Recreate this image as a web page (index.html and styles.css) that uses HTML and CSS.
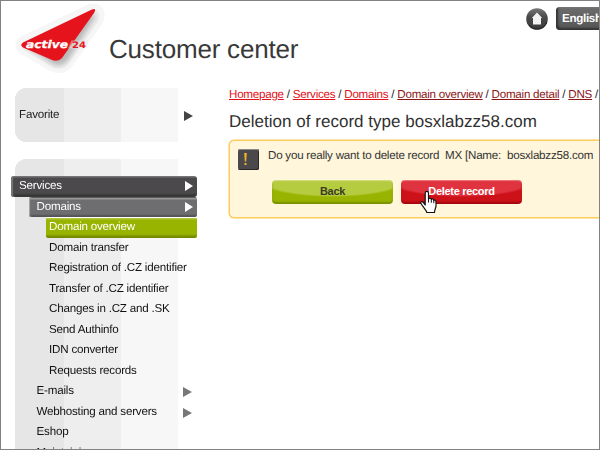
FILE: index.html
```html
<!DOCTYPE html>
<html lang="en">
<head>
<meta charset="utf-8">
<title>Customer center</title>
<link rel="stylesheet" href="styles.css">
</head>
<body>
<div class="window">
  <header class="header">
    <svg class="logo" width="94" height="76" viewBox="12 1 94 76">
      <defs>
        <filter id="soft" x="-30%" y="-30%" width="160%" height="160%"><feGaussianBlur stdDeviation="2.2"/></filter>
      </defs>
      <path d="M25 45 L92 13 Q97 12 94 19 L65 60 Q61 66 53 62Z" fill="#f6f6f6" stroke="#f6f6f6" stroke-width="19" stroke-linejoin="round"/>
      <path d="M27 46 L91 15 Q96 13 93 20 L65 60 Q61 66 53 62Z" fill="#ececec" stroke="#ececec" stroke-width="10" stroke-linejoin="round"/>
      <path d="M27 47 L92 15 Q97 13 94 19 L68 60 Q61 68 53 64Z" fill="#999" opacity=".6" filter="url(#soft)"/>
      <path d="M23 42.500 L92 9.500 Q97 7.500 94 13 L62 58 Q58 62.500 51 59.500 L23 47.500 Q19.500 45 23 42.500Z" fill="#e5131b"/>
      <path d="M71.500 40.500H88L86.500 48.500H68Z" fill="#e4e4e4" opacity=".5"/>
      <text class="logo-name" x="26" y="47.500" textLength="42" lengthAdjust="spacingAndGlyphs">active</text>
      <text class="logo-number" x="72" y="47.500" textLength="14" lengthAdjust="spacingAndGlyphs">24</text>
    </svg>
    <h1 class="brand">Customer center</h1>
    <div class="tools">
      <svg class="home" width="22" height="22" viewBox="0 0 22 22">
        <defs><linearGradient id="knob" x2="0" y2="1"><stop stop-color="#777"/><stop offset=".4" stop-color="#4b4a4b"/><stop offset="1" stop-color="#3b3a3b"/></linearGradient></defs>
        <circle cx="11" cy="11" r="10.800" fill="url(#knob)"/>
        <path d="M3 17A10.300 10.300 0 0 0 20.800 14" fill="none" stroke="#222" stroke-width="1"/>
        <path d="M11 4.500L16.200 10H15V16.500H7V10H5.800Z" fill="#f2f2f2"/>
      </svg>
      <span class="language">English</span>
    </div>
  </header>
  <div class="columns">
    <aside class="sidebar">
      <div class="favorite"><span>Favorite</span><i class="arrow arrow-dark"></i></div>
      <nav class="menu">
        <a class="item top-item">Services<i class="arrow arrow-white"></i></a>
        <a class="item sub-item active-sub">Domains<i class="arrow arrow-white"></i></a>
        <a class="item leaf current">Domain overview</a>
        <a class="item leaf">Domain transfer</a>
        <a class="item leaf">Registration of .CZ identifier</a>
        <a class="item leaf">Transfer of .CZ identifier</a>
        <a class="item leaf">Changes in .CZ and .SK</a>
        <a class="item leaf">Send Authinfo</a>
        <a class="item leaf">IDN converter</a>
        <a class="item leaf">Requests records</a>
        <a class="item sub-item">E-mails<i class="arrow arrow-gray"></i></a>
        <a class="item sub-item">Webhosting and servers<i class="arrow arrow-gray"></i></a>
        <a class="item sub-item">Eshop</a>
        <a class="item sub-item">Maintaining</a>
      </nav>
    </aside>
    <main class="main">
      <div class="crumbs"><a>Homepage</a> / <a>Services</a> / <a>Domains</a> / <a class="visited">Domain overview</a> / <a class="visited">Domain detail</a> / <a class="visited">DNS</a> /</div>
      <h2 class="title">Deletion of record type bosxlabzz58.com</h2>
      <section class="alert">
        <div class="question">
          <span class="warning"><svg width="20" height="20" viewBox="0 0 20 20"><path d="M6.200 4H8.800L8.200 12.500H6.800ZM6.500 14H8.500V16H6.500Z" fill="#eeb22c"/></svg></span>
          <p class="message">Do you really want to delete record&nbsp; MX [Name:&nbsp; bosxlabzz58.com</p>
        </div>
        <div class="actions">
          <button class="button back"><span>Back</span></button>
          <button class="button delete"><span>Delete record</span></button>
        </div>
      </section>
    </main>
  </div>
  <svg class="pointer" width="19" height="24" viewBox="0 0 19 24">
    <path d="M6.200 15V3.200C6.200.8 9.500.8 9.500 3.200V9C10 7.800 12 8 12.300 9.400C13 8.500 14.600 9 14.800 10.300C16 9.700 17 10.500 17 12V16C17 18 15.500 19.500 15.500 22.500H7.800C7.500 20 4.500 17.800 2 13.500C1 11.800 3 11 4.200 12.300Z" fill="#fff" stroke="#111" stroke-width="1.200" stroke-linejoin="round"/>
    <path d="M9.500 9V12.500M12.300 9.500V12.800M14.800 10.500V13.200" stroke="#111" stroke-width="1" fill="none"/>
  </svg>
</div>
</body>
</html>
```
FILE: styles.css
```css
* { box-sizing: border-box; }
body { margin: 0; font: 11.600px/20.500px "Liberation Sans", Arial, sans-serif; letter-spacing: -.2px; text-rendering: geometricPrecision; color: #222; background: #fff; }
.window { position: relative; width: 600px; height: 450px; border: 1px solid #828282; overflow: hidden; }
.header { display: flex; height: 87px; }
.logo { flex: none; margin-left: 11px; }
.logo-name { font: italic bold 10.500px "DejaVu Sans", sans-serif; letter-spacing: 0; fill: #fff; stroke: #fff; stroke-width: .3px; }
.logo-number { font: bold 9px "DejaVu Sans", sans-serif; letter-spacing: 0; fill: #e5131b; }
.brand { flex: none; width: 240px; margin: 30px 0 0 3px; font-size: 26px; line-height: 36px; font-weight: 400; letter-spacing: -.2px; color: #393939; }
.tools { display: flex; flex: none; gap: 8px; margin-left: 177px; padding-top: 6px; }
.home { margin-top: 1px; }
.language { width: 60px; height: 23px; padding-left: 6px; border-radius: 4px; background: linear-gradient(#777 0, #6b6a6b 10%, #555 100%); box-shadow: inset 2px -2px 2px #333; color: #fff; font-weight: 700; line-height: 24px; letter-spacing: -.3px; }
.columns { display: flex; }
.sidebar { flex: none; width: 197px; padding-left: 10px; }
.favorite, .menu { background: linear-gradient(90deg, #e6e6e6 49px, #eee 49px 106px, #f7f7f7 106px 163px, transparent 163px) 4px 0 / 164px 100% no-repeat; }
.favorite { display: flex; align-items: center; height: 54px; padding-left: 8px; margin-bottom: 17px; }
.menu { height: 320px; padding-top: 17px; }
/* Rounded outer corners on the striped panels */
.menu { -webkit-mask: radial-gradient(circle at 16px 12px, #000 12px, transparent 12.500px) 0 0 / 16px 12px no-repeat, linear-gradient(#000 0 0) 16px 0 / 180px 12px no-repeat, linear-gradient(#000 0 0) 0 12px / 196px 320px no-repeat; }
.favorite { -webkit-mask: radial-gradient(circle at 16px 12px, #000 12px, transparent 12.500px) 0 0 / 16px 12px no-repeat, linear-gradient(#000 0 0) 16px 0 / 180px 54px no-repeat, linear-gradient(#000 0 0) 0 12px / 16px 30px no-repeat, radial-gradient(circle at 16px 0, #000 12px, transparent 12.500px) 0 42px / 16px 12px no-repeat; }
.arrow { width: 0; height: 0; margin-left: auto; border: solid transparent; border-width: 5px 0 5px 9px; }
.arrow-dark { margin: 2px 5px 0 auto; border-left-color: #454545; }
.arrow-white { margin-right: 4px; border-width: 5px 0 5px 8px; border-left-color: #fff; }
.arrow-gray { margin: 2px 5px 0 auto; border-left-color: #777; }
.item { display: flex; align-items: center; width: 186px; height: 20.500px; padding-left: 25.500px; white-space: nowrap; color: #111; }
.top-item { padding-left: 8px; border-radius: 3px; background: linear-gradient(#767576 0 1px, #4b494b 2px 17px, #333 20px); box-shadow: inset 2px 0 1px #777; color: #fff; }
.active-sub { width: 168px; margin-left: 18px; padding-left: 7.500px; border-radius: 2px; background: linear-gradient(#555 0 1px, #999 1px 2px, #6e6d6f 3px 17px, #444 20px); box-shadow: inset 1px 0 1px #aaa; color: #fff; }
.leaf { padding-left: 38px; }
.current { width: 151px; margin-left: 35px; padding-left: 3px; border-radius: 2px; background: linear-gradient(#fff 0 1px, #b3c53b 1px 2px, #99b400 3px 17px, #728900 20px); color: #fff; }
.main { flex: none; width: 480px; margin-left: 31px; }
.crumbs { height: 18px; margin-top: -3px; line-height: 19px; white-space: nowrap; letter-spacing: -.24px; }
.crumbs a { color: #e01018; text-decoration: underline; text-underline-offset: 1px; }
.crumbs .visited { color: #8b1515; }
.title { margin: 7px 0 0; font-size: 17px; line-height: 24px; font-weight: 400; letter-spacing: .020px; white-space: nowrap; color: #303030; }
.alert { height: 78px; margin-top: 6px; padding: 8px 0 0 8px; border: 1px solid #fdcc5b; border-radius: 5px; background: #fff6db; box-shadow: 0 0 0 .500px #fdcc5b; }
.question { display: flex; height: 31px; }
.warning { width: 21px; height: 21px; border-radius: 2px; background: #4a484a; box-shadow: inset 0 1px #8a8889, inset -1px -1px #292829; }
.message { margin: -3px 0 0 9px; white-space: nowrap; letter-spacing: -.23px; color: #333; }
.actions { display: flex; gap: 8px; margin-left: 34px; }
.button { width: 121px; height: 24px; padding: 0 0 2px; border: 0; border-radius: 4px; color: #fff; font: 700 11px "Liberation Sans", Arial, sans-serif; letter-spacing: -.3px; }
.back { color: #3b3b26; background: radial-gradient(ellipse 75px 17px at 50% 0, #b6cc40 90%, transparent 100%), #99b400; box-shadow: inset 0 1px 1px #d2df83, inset 0 -2px 2px #789000; }
.delete { background: radial-gradient(ellipse 75px 17px at 50% 0, #df3440 90%, transparent 100%), #cd1119; box-shadow: inset 0 1px 1px #ef777b, inset 0 -2px 2px #a3070d; }
.pointer { position: absolute; left: 418px; top: 189px; }
```
